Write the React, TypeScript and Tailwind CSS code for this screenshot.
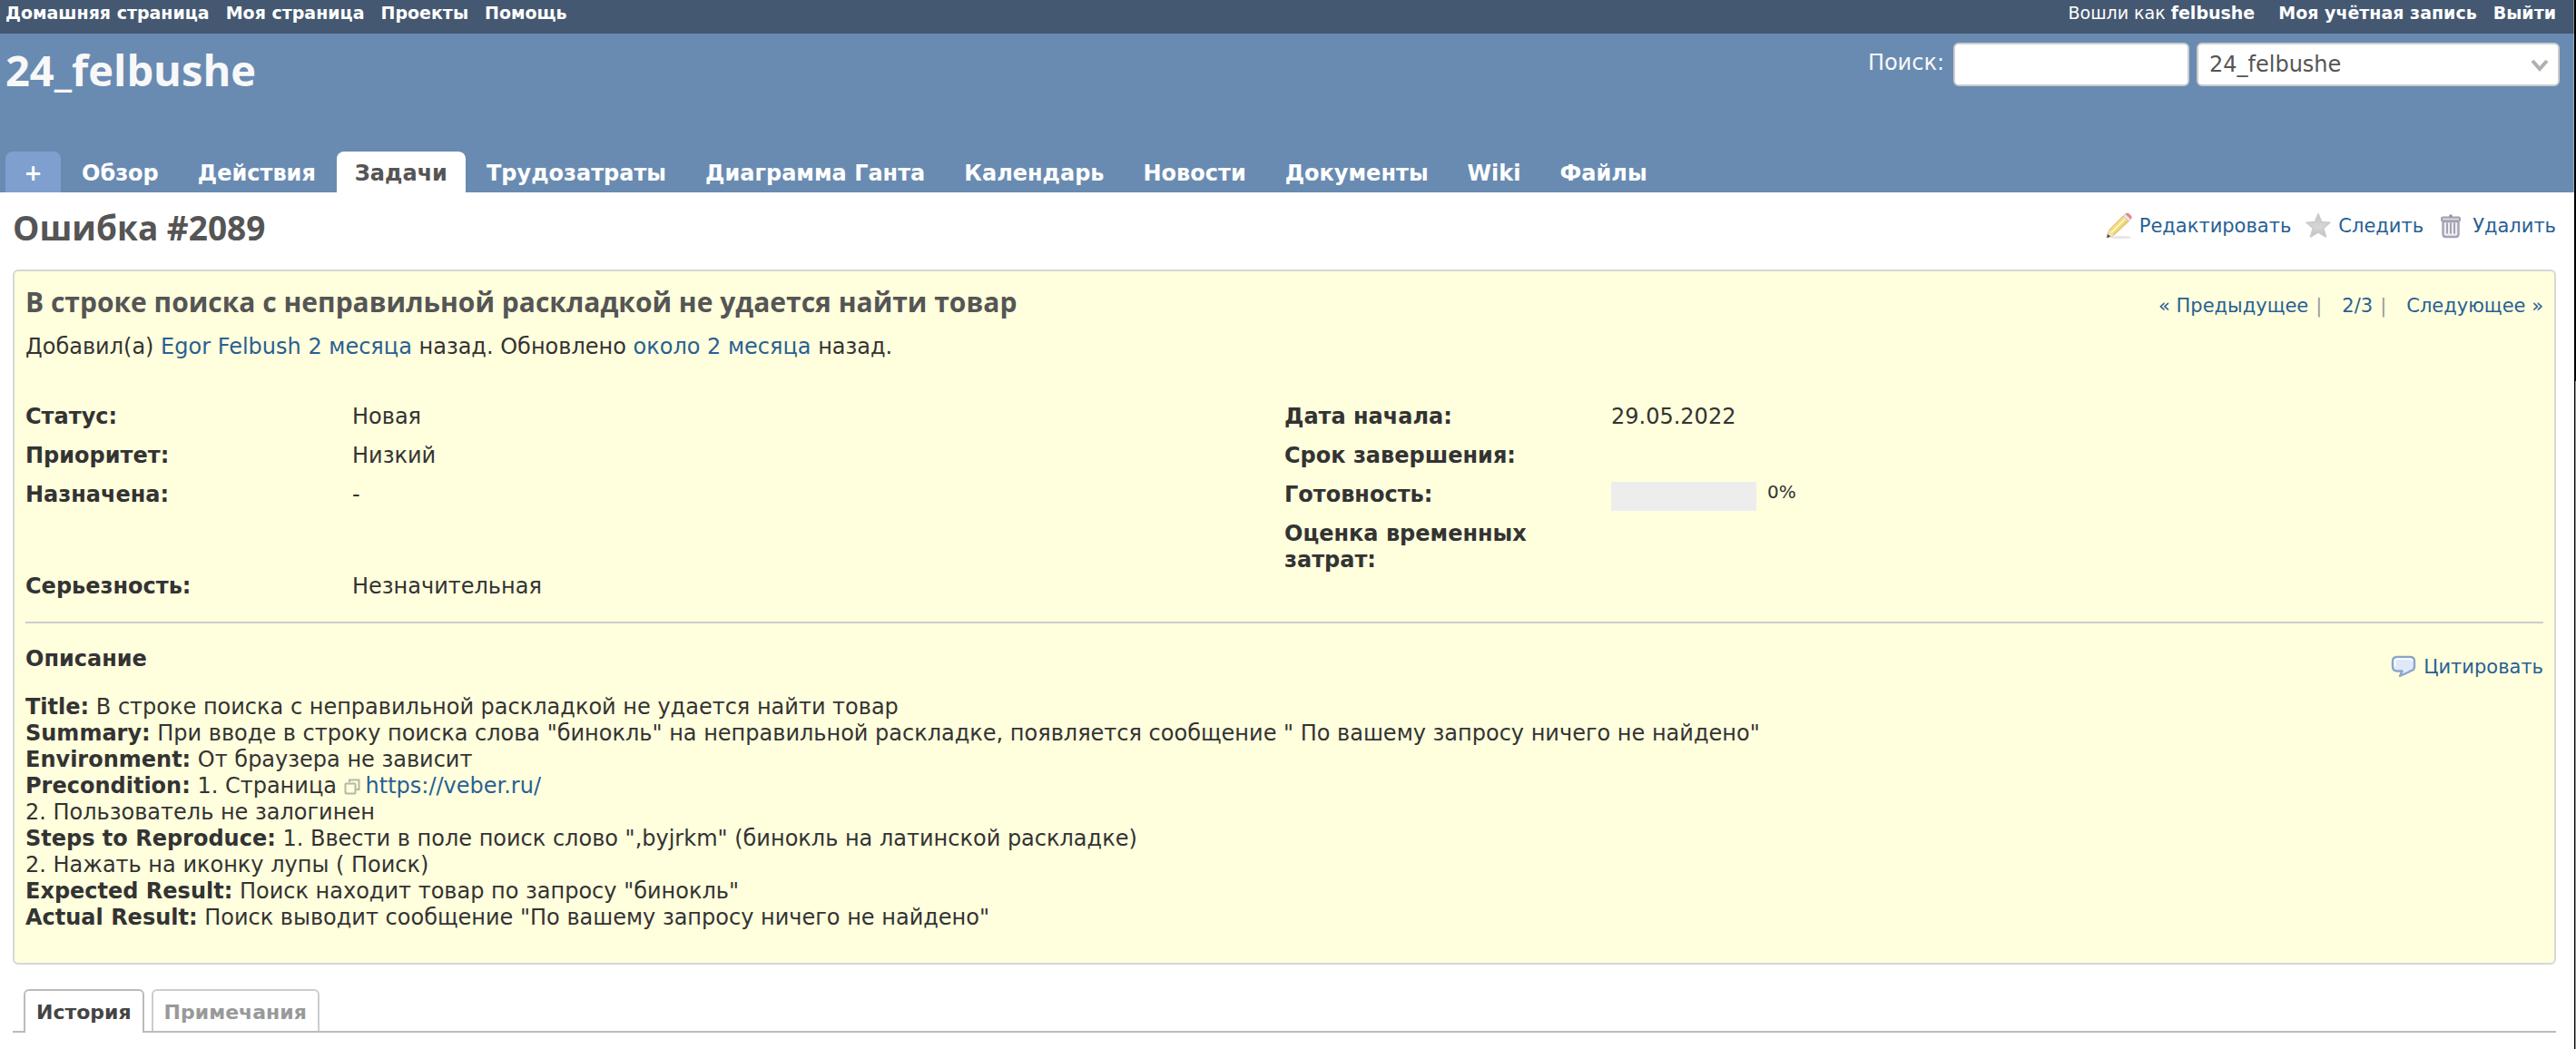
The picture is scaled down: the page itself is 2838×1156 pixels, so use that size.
import React from "react";

const link = "text-[#296094] hover:underline";

const tabs = [
  "Обзор",
  "Действия",
  "Задачи",
  "Трудозатраты",
  "Диаграмма Ганта",
  "Календарь",
  "Новости",
  "Документы",
  "Wiki",
  "Файлы",
];

function PencilIcon() {
  return (
    <svg viewBox="0 0 32 32" className="size-8 shrink-0" aria-hidden="true">
      <defs>
        <linearGradient id="wood" x1="0" y1="0" x2="1" y2="1">
          <stop offset="0" stopColor="#fbf0a4" />
          <stop offset="1" stopColor="#e6bd52" />
        </linearGradient>
      </defs>
      <ellipse cx="17" cy="28.5" rx="12" ry="1.6" fill="#000" opacity="0.1" />
      <path d="M2 29 L4.500 20.500 L20 5 L26 11 L10 26 Z" fill="url(#wood)" stroke="#d9b866" strokeWidth="1" />
      <path d="M7 23.500 L22.500 8" stroke="#fff6bd" strokeWidth="2" />
      <path d="M2 29 L4.500 20.500 L10 26 Z" fill="#f1dfc0" />
      <path d="M2 29 L3.200 25 L6 27.700 Z" fill="#4a4238" />
      <path d="M20 5 L22.500 2.800 L28.500 8.500 L26 11 Z" fill="#e6e6e6" stroke="#c5c5c5" strokeWidth="0.8" />
      <path d="M22.500 2.800 Q24.500 0.800 27 2.800 L29 4.800 Q30.500 7 28.500 8.500 Z" fill="#f0807f" />
    </svg>
  );
}

function StarIcon() {
  return (
    <svg viewBox="0 0 32 32" className="size-8 shrink-0" aria-hidden="true">
      <defs>
        <linearGradient id="silver" x1="0" y1="0" x2="0" y2="1">
          <stop offset="0" stopColor="#c4c4c4" />
          <stop offset="0.6" stopColor="#d6d6d6" />
          <stop offset="1" stopColor="#bdbdbd" />
        </linearGradient>
      </defs>
      <path
        d="M16 2.500 L19.600 11.500 L29 12.300 L21.800 18.500 L24.600 28 L16 23 L7.400 28 L10.200 18.500 L3 12.300 L12.400 11.500 Z"
        fill="url(#silver)"
        stroke="#cbcbcb"
        strokeWidth="1.5"
        strokeLinejoin="round"
      />
    </svg>
  );
}

function TrashIcon() {
  return (
    <svg viewBox="0 0 32 32" className="size-8 shrink-0" fill="none" aria-hidden="true">
      <path d="M7.500 11 V25 Q7.500 28 10.500 28 H21.500 Q24.500 28 24.500 25 V11 Z" fill="#eeeef2" stroke="#a3a3b3" strokeWidth="2.400" />
      <path d="M12 12.500 V24.500 M16 12.500 V24.500 M20 12.500 V24.500" stroke="#a3a3b3" strokeWidth="2" />
      <rect x="6" y="6.500" width="20" height="4" rx="1.500" fill="#d8d8df" stroke="#a0a0b0" strokeWidth="2" />
      <path d="M16 3.500 V6" stroke="#8d8d9d" strokeWidth="3" />
    </svg>
  );
}

function CommentIcon() {
  return (
    <svg viewBox="0 0 32 32" className="size-8 shrink-0" aria-hidden="true">
      <path
        d="M9 5 H23 Q28 5 28 9.500 V15.500 Q28 20 23 20.500 L22 21.500 L12 26 L14.500 20.500 H9 Q4 20.500 4 16 V9.500 Q4 5 9 5 Z"
        fill="#dfe8fa"
        stroke="#8ba5c9"
        strokeWidth="2.400"
        strokeLinejoin="round"
      />
      <path d="M6.500 15.500 V9.500 Q6.500 7.200 9 7.200 H23 Q25.500 7.200 25.500 9.500" fill="none" stroke="#fff" strokeWidth="1.800" />
    </svg>
  );
}

function ExternalIcon() {
  return (
    <svg viewBox="0 0 18 18" className="mr-1.5 inline size-[18px] align-[-2px]" fill="none" stroke="#b3b8a6" strokeWidth="2" aria-hidden="true">
      <path d="M6 4 V1.500 H16.500 V12 H13.500" />
      <rect x="1.500" y="5.500" width="11" height="11" rx="1" />
    </svg>
  );
}

function Label({ children }: { children: React.ReactNode }) {
  return <dt className="pr-2 font-bold">{children}</dt>;
}

export default function App() {
  return (
    <div className="flex min-h-screen bg-white font-['DejaVu_Sans',Verdana,sans-serif] text-2xl leading-[29px] text-[#333]">
      <div className="min-w-0 flex-1">
        <nav className="flex h-[37px] justify-between border-r border-white/30 bg-[#445871] px-1.5 pt-[3px] pr-[19px] text-[19px] leading-[22px] font-bold text-white">
          <div className="flex gap-[18px]">
            <a href="#home">Домашняя страница</a>
            <a href="#my">Моя страница</a>
            <a href="#projects">Проекты</a>
            <a href="#help">Помощь</a>
          </div>
          <div className="flex gap-[18px]">
            <span className="mr-2 font-normal">
              Вошли как{" "}
              <a href="#user" className="font-bold">
                felbushe
              </a>
            </span>
            <a href="#account">Моя учётная запись</a>
            <a href="#logout">Выйти</a>
          </div>
        </nav>

        <header className="flex h-[175px] flex-col justify-between border-r border-white/30 bg-[#698bb2] pl-1.5 text-[#f8f8f8]">
          <div className="flex items-start justify-between pr-[15px]">
            <h1 className="pt-2 font-['Open_Sans',sans-serif] text-[47px] leading-[65px] font-bold">24_felbushe</h1>
            <form className="flex items-start pt-2.5" onSubmit={(e) => e.preventDefault()}>
              <label htmlFor="q" className="pt-2 pr-2.5">
                Поиск:
              </label>
              <input id="q" type="text" className="mr-2 h-12 w-[260px] rounded-md border-2 border-[#ccc] bg-white px-3 text-[#444]" />
              <div className="relative">
                <select
                  aria-label="Проект"
                  className="h-12 w-[400px] appearance-none rounded-md border-2 border-[#ccc] bg-white px-3 text-[#555]"
                >
                  <option>24_felbushe</option>
                </select>
                <svg viewBox="0 0 20 14" className="pointer-events-none absolute top-[18px] right-3 h-[14px] w-5" fill="none" stroke="#b0b0b0" strokeWidth="4" aria-hidden="true">
                  <path d="M2 2 L10 11 L18 2" />
                </svg>
              </div>
            </form>
          </div>
          <div className="flex items-end gap-[3px] font-bold text-white">
            <button type="button" className="w-[61px] rounded-t-lg bg-[#7f9fcf] pt-2.5 pb-1.5">
              +
            </button>
            {tabs.map((t) => (
              <a
                key={t}
                href="#tab"
                className={t === "Задачи" ? "rounded-t-lg bg-white px-5 pt-2.5 pb-1.5 text-[#555]" : "px-5 pt-2.5 pb-1.5"}
              >
                {t}
              </a>
            ))}
          </div>
        </header>

        <main className="px-3.5 pt-[13px] pr-5">
          <div className="flex items-start justify-between pb-5">
            <h2 className="font-['Open_Sans',sans-serif] text-[37px] leading-[52px] font-bold text-[#555]">Ошибка #2089</h2>
            <div className="flex gap-3.5 pt-2 text-[21px]">
              <a href="#edit" className="flex items-center gap-1.5 text-[#296094]">
                <PencilIcon />
                Редактировать
              </a>
              <a href="#watch" className="flex items-center gap-1.5 text-[#296094]">
                <StarIcon />
                Следить
              </a>
              <a href="#delete" className="flex items-center gap-2 text-[#296094]">
                <TrashIcon />
                Удалить
              </a>
            </div>
          </div>

          <section className="rounded-md border-2 border-[#d7d7d7] bg-[#ffffdd] px-3 pt-[13px] pb-[35px]">
            <div className="flex items-start justify-between">
              <h3 className="font-['Open_Sans',sans-serif] text-[30px] leading-[42px] font-bold text-[#555]">
                В строке поиска с неправильной раскладкой не удается найти товар
              </h3>
              <div className="flex pt-[11px] text-[21px] text-[#999]">
                <a href="#prev" className={link}>
                  « Предыдущее
                </a>
                <span className="mr-[22px] ml-2">|</span>
                <a href="#list" className={link}>
                  2/3
                </a>
                <span className="mr-[22px] ml-2">|</span>
                <a href="#next" className={link}>
                  Следующее »
                </a>
              </div>
            </div>
            <p className="mt-3.5">
              Добавил(а) <a href="#egor" className={link}>Egor Felbush</a>{" "}
              <a href="#created" className={link}>2 месяца</a> назад. Обновлено{" "}
              <a href="#updated" className={link}>около 2 месяца</a> назад.
            </p>

            <dl className="mt-12 grid auto-rows-[minmax(43px,auto)] grid-cols-[360px_1fr_360px_1fr]">
              <Label>Статус:</Label>
              <dd>Новая</dd>
              <Label>Дата начала:</Label>
              <dd>29.05.2022</dd>
              <Label>Приоритет:</Label>
              <dd>Низкий</dd>
              <Label>Срок завершения:</Label>
              <dd />
              <Label>Назначена:</Label>
              <dd>-</dd>
              <Label>Готовность:</Label>
              <dd className="flex items-start gap-3 text-xl leading-[22px]">
                <span className="h-8 w-40 bg-[#ededed]" />
                0%
              </dd>
              <dt />
              <dd />
              <Label>Оценка временных затрат:</Label>
              <dd />
              <Label>Серьезность:</Label>
              <dd>Незначительная</dd>
            </dl>

            <hr className="mt-2.5 border-t-2 border-[#ccc]" />

            <div className="flex items-start justify-between pt-5">
              <p className="pt-[5px] font-bold">Описание</p>
              <a href="#quote" className="flex items-center gap-1.5 pt-3 text-[21px] text-[#296094]">
                <CommentIcon />
                Цитировать
              </a>
            </div>

            <div className="mt-3.5">
              <p><strong>Title:</strong> В строке поиска с неправильной раскладкой не удается найти товар</p>
              <p><strong>Summary:</strong> При вводе в строку поиска слова "бинокль" на неправильной раскладке, появляется сообщение " По вашему запросу ничего не найдено"</p>
              <p><strong>Environment:</strong> От браузера не зависит</p>
              <p>
                <strong>Precondition:</strong> 1. Страница <a href="https://veber.ru/" className={link}><ExternalIcon />https://veber.ru/</a>
              </p>
              <p>2. Пользователь не залогинен</p>
              <p><strong>Steps to Reproduce:</strong> 1. Ввести в поле поиск слово ",byjrkm" (бинокль на латинской раскладке)</p>
              <p>2. Нажать на иконку лупы ( Поиск)</p>
              <p><strong>Expected Result:</strong> Поиск находит товар по запросу "бинокль"</p>
              <p><strong>Actual Result:</strong> Поиск выводит сообщение "По вашему запросу ничего не найдено"</p>
            </div>
          </section>

          <div className="mt-[27px] flex gap-2 border-b-2 border-[#bbb] pl-3 text-[22px] font-bold">
            <a href="#history" className="-mb-0.5 rounded-t-md border-2 border-b-0 border-[#bbb] bg-white px-3 pt-[9px] pb-2 text-[#444]">
              История
            </a>
            <a href="#notes" className="rounded-t-md border-2 border-b-0 border-[#ccc] bg-white px-3 pt-[9px] pb-1.5 text-[#999]">
              Примечания
            </a>
          </div>
        </main>
      </div>
      <div className="flex w-0.5 flex-col">
        <div className="h-[420px] bg-black" />
        <div className="flex-1 border-l border-black bg-[#999]" />
      </div>
    </div>
  );
}
